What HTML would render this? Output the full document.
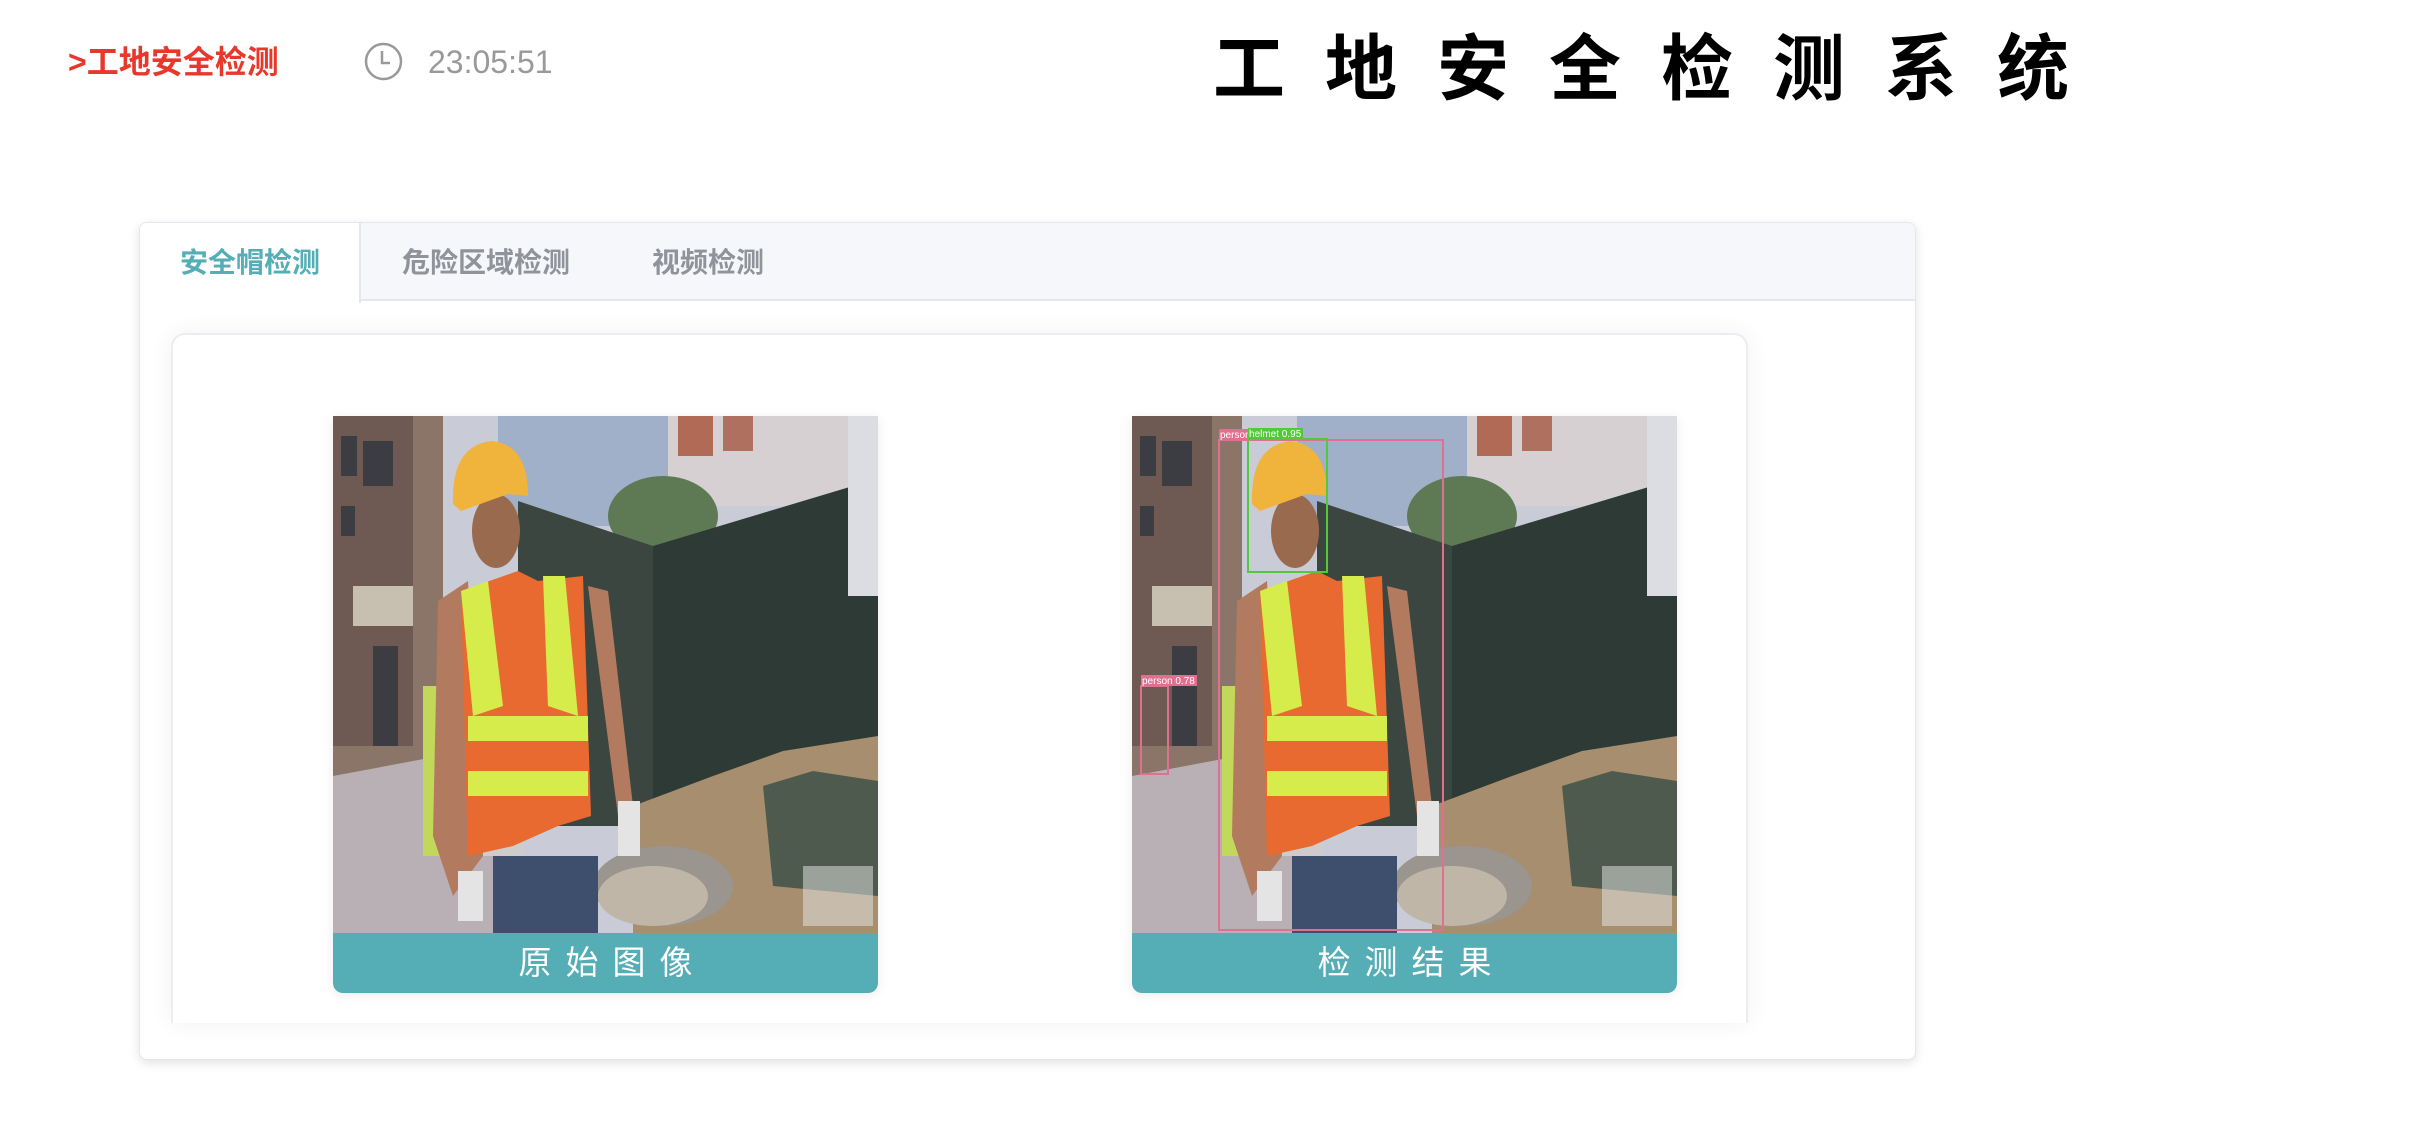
<!DOCTYPE html>
<html><head><meta charset="utf-8">
<style>
*{margin:0;padding:0;box-sizing:border-box}
html,body{width:2414px;height:1126px;background:#fff;overflow:hidden;font-family:"Liberation Sans","Noto Sans CJK SC",sans-serif}
.brand{position:absolute;left:68px;top:42px;font-size:32px;font-weight:bold;color:#e8382c;line-height:40px}
.clock{position:absolute;left:364px;top:42px;width:39px;height:39px}
.time{position:absolute;left:428px;top:42px;font-size:32px;color:#999;line-height:40px}
.title{position:absolute;left:1213px;top:28px;font-size:72px;font-weight:bold;color:#000;letter-spacing:40px;line-height:84px;white-space:nowrap}
.card{position:absolute;left:139px;top:222px;width:1777px;height:838px;background:#fff;border:1px solid #e4e7ed;border-radius:8px;box-shadow:0 3px 10px rgba(0,0,0,.12);overflow:hidden}
.tabs{position:absolute;left:0;top:0;right:0;height:78px;background:#f5f7fa;border-bottom:2px solid #e4e7ed}
.tab{position:absolute;top:0;height:78px;line-height:80px;font-size:28px;font-weight:bold;color:#909399}
.tab.active{left:0;width:221px;background:#fff;border-right:2px solid #e4e7ed;height:80px;color:#54aeb6;padding-left:40px}
.panel{position:absolute;left:31px;top:110px;width:1577px;height:690px;background:#fff;border:2px solid #ebedf2;border-bottom:none;border-radius:14px 14px 0 0;box-shadow:0 0 24px rgba(0,0,0,.06)}
.imgbox{position:absolute;top:81px;width:545px;border-radius:0 0 10px 10px;overflow:hidden;box-shadow:0 2px 12px rgba(0,0,0,.08)}
.imgbox svg{display:block;width:545px;height:517px}
.cap{height:60px;background:#55aeb6;color:#fff;font-size:33px;text-align:center;line-height:60px;letter-spacing:14px;text-indent:14px}
</style></head><body>
<div class="brand">&gt;工地安全检测</div>
<svg class="clock" viewBox="0 0 39 39"><circle cx="19.5" cy="19.5" r="17.5" fill="none" stroke="#999" stroke-width="2.5"/><path d="M18 9v12h8" fill="none" stroke="#999" stroke-width="2.5"/></svg>
<div class="time">23:05:51</div>
<div class="title">工地安全检测系统</div>

<svg width="0" height="0" style="position:absolute">
<defs>
<symbol id="scene" viewBox="0 0 545 517" preserveAspectRatio="none">
<rect width="545" height="517" fill="#c9ccd6"/>
<rect x="165" y="0" width="170" height="110" fill="#9fb0c8"/>
<rect x="335" y="0" width="185" height="90" fill="#d6d0d2"/>
<rect x="345" y="0" width="35" height="40" fill="#b06a55"/>
<rect x="390" y="0" width="30" height="35" fill="#b07060"/>
<ellipse cx="330" cy="100" rx="55" ry="40" fill="#5d7a55"/>
<rect x="0" y="0" width="110" height="360" fill="#8b7468"/>
<rect x="0" y="0" width="80" height="330" fill="#6e5a52"/>
<g fill="#3b3d42"><rect x="8" y="20" width="16" height="40"/><rect x="30" y="25" width="30" height="45"/><rect x="8" y="90" width="14" height="30"/><rect x="40" y="230" width="25" height="100"/></g>
<rect x="20" y="170" width="60" height="40" fill="#c7c0b0"/>
<polygon points="0,360 160,330 180,517 0,517" fill="#b8b0b4"/>
<polygon points="185,85 320,130 320,410 185,410" fill="#3c4640"/>
<polygon points="320,130 520,70 545,60 545,330 320,410" fill="#2e3a36"/>
<rect x="515" y="0" width="30" height="180" fill="#dcdde2"/>
<polygon points="300,390 380,360 450,335 545,320 545,517 300,517" fill="#a68e6e"/>
<polygon points="430,370 480,355 545,365 545,480 440,470" fill="#4f5a4e"/>
<ellipse cx="330" cy="470" rx="70" ry="40" fill="#9a958e"/>
<ellipse cx="320" cy="480" rx="55" ry="30" fill="#c0b6a8"/>
<rect x="90" y="270" width="35" height="170" fill="#c2d85a"/>
<rect x="130" y="170" width="60" height="270" fill="#d0cccc"/>
<polygon points="105,185 135,165 150,440 120,480 100,420" fill="#b27a5e"/>
<polygon points="128,175 185,155 205,165 250,160 258,400 225,410 180,430 135,440" fill="#e86a30"/>
<g fill="#d6ec4a"><polygon points="128,175 155,165 170,290 140,300"/><polygon points="210,160 232,160 245,300 215,290"/><rect x="135" y="300" width="120" height="25"/><rect x="135" y="355" width="120" height="25"/></g>
<polygon points="255,170 275,175 300,390 285,400" fill="#b27a5e"/>
<rect x="160" y="440" width="105" height="77" fill="#3e4f6e"/>
<rect x="125" y="455" width="25" height="50" fill="#e4e4e4"/>
<rect x="285" y="385" width="22" height="55" fill="#e4e4e4"/>
<ellipse cx="163" cy="115" rx="24" ry="37" fill="#9a6a4e"/>
<path d="M120 88 Q118 30 158 25 Q195 28 195 80 L175 78 L128 95 Z" fill="#f0b43c"/>
<rect x="470" y="450" width="70" height="60" fill="#e8e8e8" opacity=".5"/>
</symbol>
</defs></svg>

<div class="card">
  <div class="tabs">
    <div class="tab active">安全帽检测</div>
    <div class="tab" style="left:262px">危险区域检测</div>
    <div class="tab" style="left:512px">视频检测</div>
  </div>
  <div class="panel">
    <div class="imgbox" style="left:160px">
      <svg viewBox="0 0 545 517" preserveAspectRatio="none"><use href="#scene"/></svg>
      <div class="cap">原始图像</div>
    </div>
    <div class="imgbox" style="left:959px">
      <svg viewBox="0 0 545 517" preserveAspectRatio="none"><use href="#scene"/>
        <rect x="87" y="24" width="224" height="490" fill="none" stroke="#e0708f" stroke-width="2"/>
        <rect x="87" y="13" width="30" height="11" fill="#e0708f"/>
        <text x="88" y="22" font-size="10" fill="#fff" font-family="Liberation Sans">person</text>
        <rect x="116" y="23" width="79" height="133" fill="none" stroke="#52c93a" stroke-width="2"/>
        <rect x="116" y="12" width="55" height="11" fill="#52c93a"/>
        <text x="117" y="21" font-size="10" fill="#fff" font-family="Liberation Sans">helmet 0.95</text>
        <rect x="9" y="270" width="27" height="88" fill="none" stroke="#e0708f" stroke-width="2"/>
        <rect x="9" y="259" width="56" height="11" fill="#e0708f"/>
        <text x="10" y="268" font-size="10" fill="#fff" font-family="Liberation Sans">person 0.78</text>
      </svg>
      <div class="cap">检测结果</div>
    </div>
  </div>
</div>
</body></html>
